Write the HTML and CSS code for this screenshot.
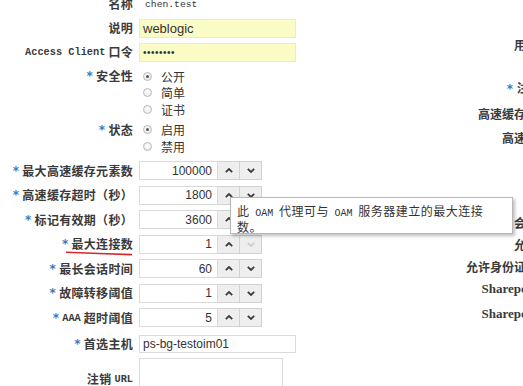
FILE: index.html
```html
<!DOCTYPE html>
<html lang="zh-CN">
<head>
<meta charset="utf-8">
<title>OAM 代理</title>
<link rel="stylesheet" href="styles.css">
</head>
<body>
<div class="page">
  <div class="left">
    <div class="lbl">名称</div>
    <div class="val r24"><span class="mono-val">chen.test</span></div>

    <div class="lbl">说明</div>
    <div class="val r24"><div class="field yellow wide">weblogic</div></div>

    <div class="lbl"><span class="mono-lbl">Access Client</span>&nbsp;口令</div>
    <div class="val r24"><div class="field yellow wide"><span class="dots">••••••••</span></div></div>

    <div class="lbl top"><span class="req">*</span>安全性</div>
    <div class="radios">
      <label class="opt"><span class="radio checked"></span>公开</label>
      <label class="opt"><span class="radio"></span>简单</label>
      <label class="opt"><span class="radio"></span>证书</label>
    </div>

    <div class="lbl top"><span class="req">*</span>状态</div>
    <div class="radios last">
      <label class="opt"><span class="radio checked"></span>启用</label>
      <label class="opt"><span class="radio"></span>禁用</label>
    </div>

    <div class="lbl"><span class="req">*</span>最大高速缓存元素数</div>
    <div class="val rn"><div class="field num">100000</div><span class="spin"><svg viewBox="0 0 8 5"><polyline points="0.8,4.2 4,1 7.2,4.2"/></svg></span><span class="spin"><svg viewBox="0 0 8 5"><polyline points="0.8,0.8 4,4 7.2,0.8"/></svg></span></div>

    <div class="lbl"><span class="req">*</span>高速缓存超时（秒）</div>
    <div class="val rn"><div class="field num">1800</div><span class="spin"><svg viewBox="0 0 8 5"><polyline points="0.8,4.2 4,1 7.2,4.2"/></svg></span><span class="spin"><svg viewBox="0 0 8 5"><polyline points="0.8,0.8 4,4 7.2,0.8"/></svg></span></div>

    <div class="lbl"><span class="req">*</span>标记有效期（秒）</div>
    <div class="val rn"><div class="field num">3600</div><span class="spin"><svg viewBox="0 0 8 5"><polyline points="0.8,4.2 4,1 7.2,4.2"/></svg></span><span class="spin"><svg viewBox="0 0 8 5"><polyline points="0.8,0.8 4,4 7.2,0.8"/></svg></span></div>

    <div class="lbl"><span class="req">*</span>最大连接数<svg class="mark" viewBox="0 0 68 5" preserveAspectRatio="none"><path d="M1 1.2 Q34 2.6 67 3.6"/></svg></div>
    <div class="val rn"><div class="field num">1</div><span class="spin"><svg viewBox="0 0 8 5"><polyline points="0.8,4.2 4,1 7.2,4.2"/></svg></span><span class="spin disabled"><svg viewBox="0 0 8 5"><polyline points="0.8,0.8 4,4 7.2,0.8"/></svg></span></div>

    <div class="lbl"><span class="req">*</span>最长会话时间</div>
    <div class="val rn"><div class="field num">60</div><span class="spin"><svg viewBox="0 0 8 5"><polyline points="0.8,4.2 4,1 7.2,4.2"/></svg></span><span class="spin"><svg viewBox="0 0 8 5"><polyline points="0.8,0.8 4,4 7.2,0.8"/></svg></span></div>

    <div class="lbl"><span class="req">*</span>故障转移阈值</div>
    <div class="val rn"><div class="field num">1</div><span class="spin"><svg viewBox="0 0 8 5"><polyline points="0.8,4.2 4,1 7.2,4.2"/></svg></span><span class="spin"><svg viewBox="0 0 8 5"><polyline points="0.8,0.8 4,4 7.2,0.8"/></svg></span></div>

    <div class="lbl"><span class="req">*</span><span class="mono-lbl">AAA</span>&nbsp;超时阈值</div>
    <div class="val rn"><div class="field num">5</div><span class="spin"><svg viewBox="0 0 8 5"><polyline points="0.8,4.2 4,1 7.2,4.2"/></svg></span><span class="spin"><svg viewBox="0 0 8 5"><polyline points="0.8,0.8 4,4 7.2,0.8"/></svg></span></div>

    <div class="lbl"><span class="req">*</span>首选主机</div>
    <div class="val rh"><div class="field host">ps-bg-testoim01</div></div>

    <div class="lbl">注销&nbsp;<span class="mono-lbl">URL</span></div>
    <div class="val rt"><div class="textarea"></div></div>
  </div>

  <div class="right">
    <div class="rl h43">用户定义的参数</div>
    <div class="rl h26 spaced"><span class="req">*</span>注销目标 URL</div>
    <div class="rl h24">高速缓存编译指示标头</div>
    <div class="rl h85">高速缓存控制标头</div>
    <div class="rl h22">会话令牌作用域</div>
    <div class="rl h22">允许主令牌操作</div>
    <div class="rl h22">允许身份证明传播的类型</div>
    <div class="rl h25 latin">Sharepoint 管理模式</div>
    <div class="rl h24 latin">Sharepoint 模拟用户</div>
  </div>
</div>

<div class="tooltip">此 <span class="mono-tip">OAM</span> 代理可与 <span class="mono-tip">OAM</span> 服务器建立的最大连接数。</div>
</body>
</html>
```
FILE: styles.css
```css
html, body {
  margin: 0;
  padding: 0;
  overflow: hidden;
  background: #ffffff;
}

body {
  position: relative;
  width: 523px;
  height: 386px;
  font-family: "Noto Sans CJK SC", "Liberation Sans", sans-serif;
  font-size: 12px;
  color: #333333;
}

.page {
  display: flex;
  margin-top: -8px;
}

.left {
  flex: none;
  width: 300px;
  display: grid;
  grid-template-columns: 133px 1fr;
  column-gap: 6px;
  align-content: start;
}

.lbl {
  position: relative;
  display: flex;
  align-items: center;
  justify-content: flex-end;
  white-space: nowrap;
  font-weight: bold;
  color: #3a3a3a;
  line-height: 14px;
  letter-spacing: 0.3px;
}

.lbl.top {
  align-items: flex-start;
  padding-top: 4px;
  line-height: 16.5px;
}

.req {
  color: #3b78c4;
  font-family: "DejaVu Sans", sans-serif;
  font-size: 12px;
  font-weight: bold;
  margin-right: 3px;
}

.mono-lbl {
  font-family: "Liberation Mono", monospace;
  font-size: 10.3px;
  font-weight: bold;
  letter-spacing: 0;
}

.mono-val {
  font-family: "Liberation Mono", monospace;
  font-size: 9.7px;
  color: #333333;
  margin-left: 6px;
}

.val {
  display: flex;
  align-items: center;
}

.r24 { height: 24px; }
.rn { height: 24.5px; }
.rh { height: 27px; }
.rt { height: 42px; align-items: flex-start; padding-top: 1px; }

.field {
  box-sizing: border-box;
  height: 19px;
  border: 1px solid #dadada;
  padding: 0 3px;
  display: flex;
  align-items: center;
  font-family: "Liberation Sans", Arial, sans-serif;
  font-size: 12px;
  color: #333333;
  background: #ffffff;
}

.yellow {
  background: #fbfbc6;
  border-color: #ececc0;
  font-size: 13px;
}

.wide { width: 157px; }

.dots {
  font-size: 10px;
  letter-spacing: 0.5px;
}

.num {
  width: 79px;
  justify-content: flex-end;
  padding-right: 5px;
}

.host {
  width: 157px;
  height: 18px;
}

.spin {
  box-sizing: border-box;
  width: 22px;
  height: 19px;
  border: 1px solid #d2d2d2;
  border-left: none;
  background: #eeeeee;
  display: flex;
  align-items: center;
  justify-content: center;
}

.spin svg {
  width: 8px;
  height: 5px;
  fill: none;
  stroke: #3c3c3c;
  stroke-width: 1.8;
}

.spin.disabled svg {
  stroke: #cfcfcf;
}

.radios {
  display: flex;
  flex-direction: column;
  padding-top: 4px;
}

.radios.last {
  padding-bottom: 4px;
}

.opt {
  height: 16.5px;
  display: flex;
  align-items: center;
  font-size: 12px;
  color: #333333;
}

.radio {
  box-sizing: border-box;
  width: 9px;
  height: 9px;
  margin-left: 3.5px;
  margin-right: 9.5px;
  border-radius: 50%;
  border: 1px solid #b9b9b9;
  background: radial-gradient(circle at 50% 40%, #ffffff 0%, #e6e6e6 100%);
  position: relative;
}

.radio.checked::after {
  content: "";
  position: absolute;
  left: 2px;
  top: 2px;
  width: 3px;
  height: 3px;
  border-radius: 50%;
  background: #555555;
}

.textarea {
  box-sizing: border-box;
  width: 144px;
  height: 42px;
  border: 1px solid #dadada;
  background: #ffffff;
}

.mark {
  position: absolute;
  right: 0;
  bottom: 1px;
  width: 68px;
  height: 5px;
  fill: none;
  stroke: #d8262b;
  stroke-width: 1.6;
  overflow: visible;
}

.right {
  flex: none;
  width: 158px;
  margin-left: 140px;
  padding-top: 41px;
  display: flex;
  flex-direction: column;
}

.rl {
  text-align: right;
  white-space: nowrap;
  font-weight: bold;
  line-height: 24px;
  color: #3a3a3a;
}

.rl.spaced {
  letter-spacing: 0.8px;
}

.rl.latin {
  font-family: "Liberation Serif", "Noto Sans CJK SC", serif;
  font-size: 13px;
}

.h22 { height: 22px; }
.h24 { height: 24px; }
.h25 { height: 25px; }
.h26 { height: 26px; }
.h43 { height: 43px; }
.h85 { height: 85px; }

.tooltip {
  position: absolute;
  left: 230px;
  top: 197px;
  box-sizing: border-box;
  width: 283px;
  height: 37px;
  padding: 6px 22px 0 6px;
  background: #ffffff;
  border: 1px solid #b8b8b8;
  box-shadow: 2px 2px 3px rgba(0, 0, 0, 0.25);
  font-size: 12px;
  line-height: 13px;
  letter-spacing: 0.5px;
  word-spacing: 2.5px;
  color: #333333;
}

.mono-tip {
  font-family: "Liberation Mono", monospace;
  font-size: 10px;
  letter-spacing: 0;
}
```
